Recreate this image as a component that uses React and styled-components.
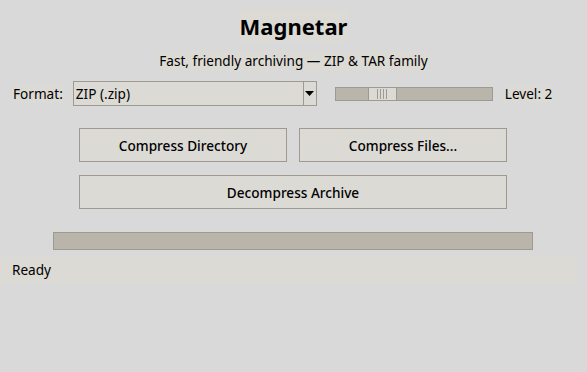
import styled, { createGlobalStyle } from "styled-components";

const GlobalStyle = createGlobalStyle`
  html, body {
    margin: 0;
    padding: 0;
    background: #d9d9d9;
  }
  body {
    font-family: "Noto Sans", "Open Sans", sans-serif;
    color: #000;
  }
`;

export default function App() {
  return (
    <>
      <GlobalStyle />
      <Window>
        <Title>Magnetar</Title>
        <Subtitle>Fast, friendly archiving — ZIP &amp; TAR family</Subtitle>

        <OptionsRow>
          <FieldLabel>Format:</FieldLabel>
          <Combo>
            <ComboText>ZIP (.zip)</ComboText>
            <ComboArrow>
              <svg width="9" height="5" viewBox="0 0 9 5">
                <path d="M0 0 L9 0 L4.5 5 Z" fill="#000" />
              </svg>
            </ComboArrow>
          </Combo>
          <Scale>
            <Trough>
              <Thumb style={{ left: 32 }}>
                <Grip />
                <Grip />
                <Grip />
                <Grip />
              </Thumb>
            </Trough>
          </Scale>
          <FieldLabel>Level: 2</FieldLabel>
        </OptionsRow>

        <ButtonGrid>
          <Button>Compress Directory</Button>
          <Button>Compress Files...</Button>
          <Button $wide>Decompress Archive</Button>
        </ButtonGrid>

        <Progress>
          <ProgressFill style={{ width: "0%" }} />
        </Progress>

        <Status>Ready</Status>
      </Window>
    </>
  );
}

const Window = styled.div`
  width: 587px;
  height: 372px;
  box-sizing: border-box;
  background: #d9d9d9;
  display: flex;
  flex-direction: column;
  align-items: center;
  padding-top: 10px;
  overflow: hidden;
`;

const Title = styled.div`
  background: #dcdad5;
  font-size: 22px;
  font-weight: 700;
  line-height: 32px;
  padding: 0 1px;
`;

const Subtitle = styled.div`
  background: #dcdad5;
  font-size: 13.6px;
  line-height: 20px;
  margin-top: 9px;
  padding: 0 1px;
`;

const OptionsRow = styled.div`
  align-self: stretch;
  display: flex;
  align-items: center;
  margin-top: 10px;
  padding-left: 12px;
  height: 25px;
`;

const FieldLabel = styled.div`
  background: #dcdad5;
  font-size: 13.6px;
  line-height: 18px;
  padding: 0 1px;
`;

const Combo = styled.div`
  width: 244px;
  height: 25px;
  box-sizing: border-box;
  margin-left: 9px;
  border: 1px solid #9e9a91;
  background: #dcdad5;
  display: flex;
`;

const ComboText = styled.div`
  flex: 1;
  font-size: 13.6px;
  line-height: 23px;
  padding-left: 2px;
`;

const ComboArrow = styled.div`
  width: 12px;
  border-left: 1px solid #9e9a91;
  display: flex;
  align-items: center;
  justify-content: center;
  padding-bottom: 1px;
`;

const Scale = styled.div`
  margin-left: 18px;
  margin-right: 11px;
`;

const Trough = styled.div`
  position: relative;
  width: 158px;
  height: 14px;
  box-sizing: border-box;
  background: #bab5ab;
  border: 1px solid #9e9a91;
`;

const Thumb = styled.div`
  position: absolute;
  top: 0;
  width: 29px;
  height: 12px;
  box-sizing: border-box;
  background: #dcdad5;
  border-left: 1px solid #9e9a91;
  border-right: 1px solid #9e9a91;
  display: flex;
  justify-content: center;
  align-items: center;
  gap: 2px;
`;

const Grip = styled.span`
  width: 1px;
  height: 10px;
  background: #9e9a91;
`;

const ButtonGrid = styled.div`
  display: grid;
  grid-template-columns: 208px 208px;
  column-gap: 12px;
  row-gap: 13px;
  margin-top: 22px;
  margin-right: 1px;
`;

const Button = styled.div`
  grid-column: ${(p) => (p.$wide ? "1 / span 2" : "auto")};
  height: 34px;
  box-sizing: border-box;
  background: #dcdad5;
  border: 1px solid #9e9a91;
  font-size: 13.6px;
  font-weight: 500;
  display: flex;
  align-items: center;
  justify-content: center;
`;

const Progress = styled.div`
  width: 480px;
  height: 18px;
  box-sizing: border-box;
  margin-top: 23px;
  margin-right: 1px;
  background: #bab5ab;
  border: 1px solid #9e9a91;
`;

const ProgressFill = styled.div`
  height: 100%;
  background: #dcdad5;
`;

const Status = styled.div`
  align-self: stretch;
  margin: 7px 10px 0 0;
  padding-left: 12px;
  background: #dcdad5;
  font-size: 13.6px;
  line-height: 26px;
`;
